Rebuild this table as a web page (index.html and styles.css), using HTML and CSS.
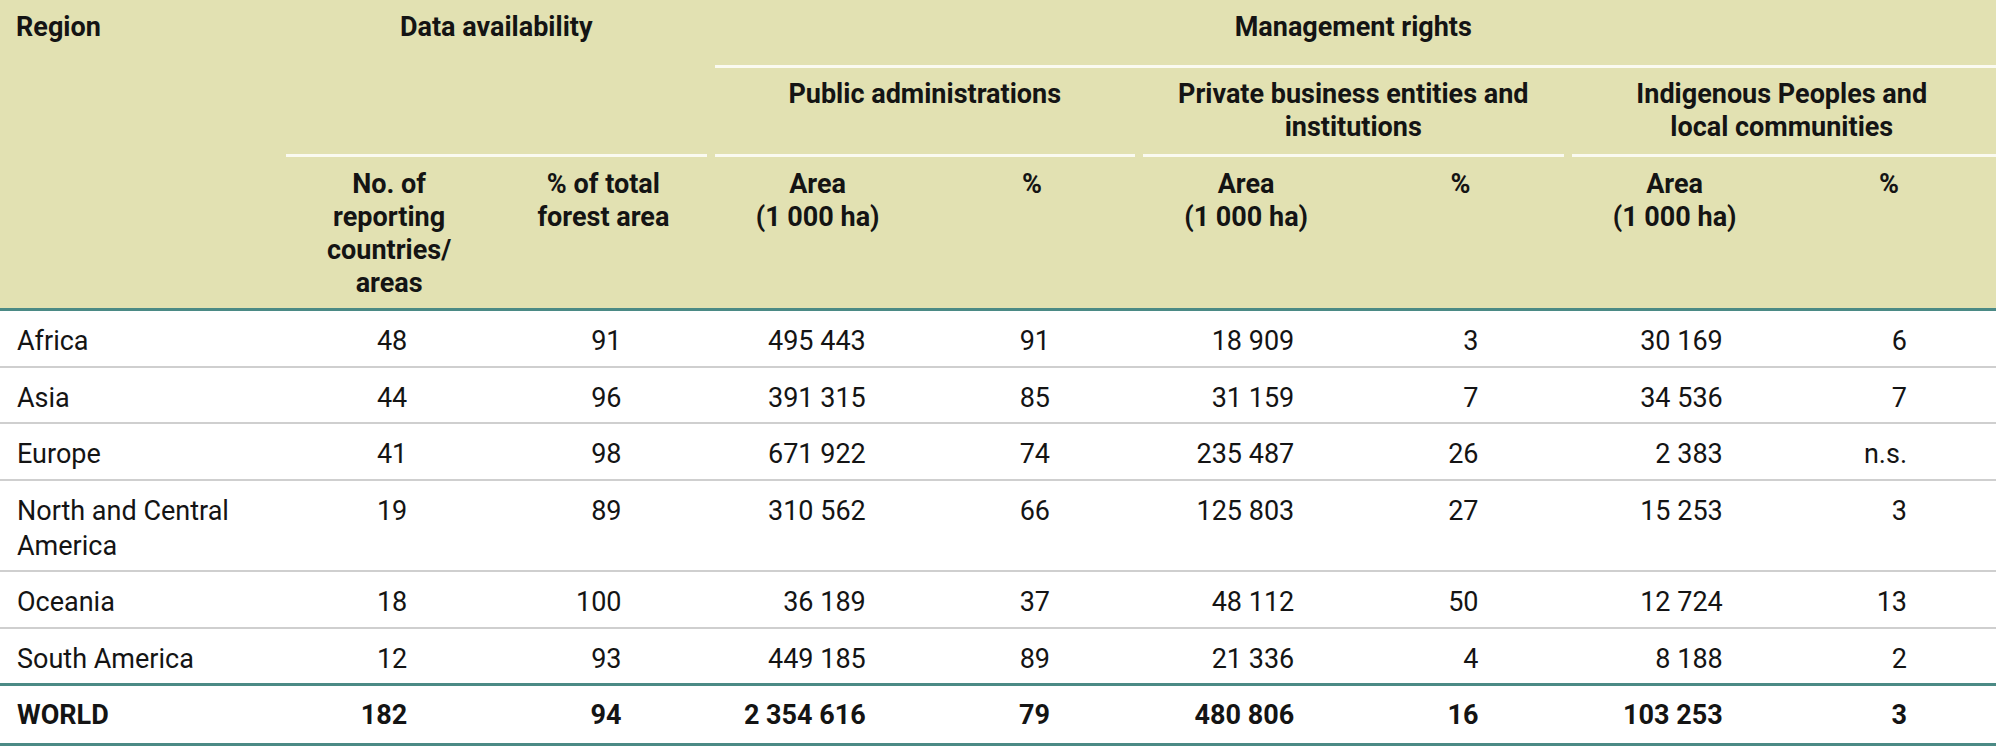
FILE: index.html
```html
<!DOCTYPE html>
<html lang="en">
<head>
<meta charset="utf-8">
<title>Management rights of forests by region</title>
<link rel="stylesheet" href="styles.css">
</head>
<body>
<table class="rights">
  <colgroup>
    <col class="c-region">
    <col class="c-num" span="8">
  </colgroup>
  <thead>
    <tr class="h1">
      <th class="region" rowspan="3">Region</th>
      <th class="group" colspan="2" rowspan="2">Data availability</th>
      <th class="group to-edge" colspan="6">Management rights</th>
    </tr>
    <tr class="h2">
      <th class="group" colspan="2">Public administrations</th>
      <th class="group" colspan="2">Private business entities and<br>institutions</th>
      <th class="group to-edge" colspan="2">Indigenous Peoples and<br>local communities</th>
    </tr>
    <tr class="h3">
      <th>No. of<br>reporting<br>countries/<br>areas</th>
      <th>% of total<br>forest area</th>
      <th>Area<br>(1 000 ha)</th>
      <th>%</th>
      <th>Area<br>(1 000 ha)</th>
      <th>%</th>
      <th>Area<br>(1 000 ha)</th>
      <th>%</th>
    </tr>
  </thead>
  <tbody>
    <tr>
      <td>Africa</td><td>48</td><td>91</td><td>495 443</td><td>91</td><td>18 909</td><td>3</td><td>30 169</td><td>6</td>
    </tr>
    <tr>
      <td>Asia</td><td>44</td><td>96</td><td>391 315</td><td>85</td><td>31 159</td><td>7</td><td>34 536</td><td>7</td>
    </tr>
    <tr>
      <td>Europe</td><td>41</td><td>98</td><td>671 922</td><td>74</td><td>235 487</td><td>26</td><td>2 383</td><td>n.s.</td>
    </tr>
    <tr>
      <td>North and Central America</td><td>19</td><td>89</td><td>310 562</td><td>66</td><td>125 803</td><td>27</td><td>15 253</td><td>3</td>
    </tr>
    <tr>
      <td>Oceania</td><td>18</td><td>100</td><td>36 189</td><td>37</td><td>48 112</td><td>50</td><td>12 724</td><td>13</td>
    </tr>
    <tr class="before-total">
      <td>South America</td><td>12</td><td>93</td><td>449 185</td><td>89</td><td>21 336</td><td>4</td><td>8 188</td><td>2</td>
    </tr>
    <tr class="total">
      <td>WORLD</td><td>182</td><td>94</td><td>2 354 616</td><td>79</td><td>480 806</td><td>16</td><td>103 253</td><td>3</td>
    </tr>
  </tbody>
</table>
</body>
</html>
```

FILE: styles.css
```css
html, body {
  margin: 0;
  padding: 0;
  background: #ffffff;
}

body {
  font-family: Roboto, "Liberation Sans", sans-serif;
  color: #141414;
  overflow: hidden;
}

.rights {
  width: 1996px;
  table-layout: fixed;
  border-collapse: separate;
  border-spacing: 0;
}

.c-region { width: 282px; }
.c-num { width: 214.25px; }

/* ---------- header ---------- */
.rights th {
  background: #e2e1b2;
  font-size: 27px;
  font-weight: 700;
  line-height: 33px;
  text-align: center;
  vertical-align: top;
  padding: 11px 6px 0;
}

.rights th.group {
  background:
    linear-gradient(#fafaf0, #fafaf0) center bottom / calc(100% - 8px) 3px no-repeat,
    #e2e1b2;
}

.rights th.group.to-edge {
  background:
    linear-gradient(#fafaf0, #fafaf0) right bottom / calc(100% - 4px) 3px no-repeat,
    #e2e1b2;
}

.h1 th {
  padding-bottom: 24px;
}

.rights th.region {
  text-align: left;
  padding: 11px 8px 0 16px;
  border-bottom: 3px solid #4b8a85;
}

.h2 th {
  padding-top: 10px;
  padding-bottom: 13px;
}

.h3 th {
  padding-top: 11px;
  padding-bottom: 8px;
  border-bottom: 3px solid #4b8a85;
}

/* ---------- body ---------- */
.rights td {
  font-size: 27px;
  line-height: 35px;
  text-align: right;
  vertical-align: top;
  padding: 13px 89px 6.5px 0;
  border-bottom: 2px solid #cfcfcf;
}

.rights td:nth-child(2n+4) {
  padding-right: 59px;
}

.rights td:first-child {
  text-align: left;
  padding-left: 17px;
  padding-right: 8px;
}

.rights tr.before-total td {
  border-bottom: 3px solid #4b8a85;
}

.rights tr.total td {
  font-weight: 700;
  padding-top: 12px;
  padding-bottom: 10px;
  border-bottom: 3px solid #4b8a85;
}
```
